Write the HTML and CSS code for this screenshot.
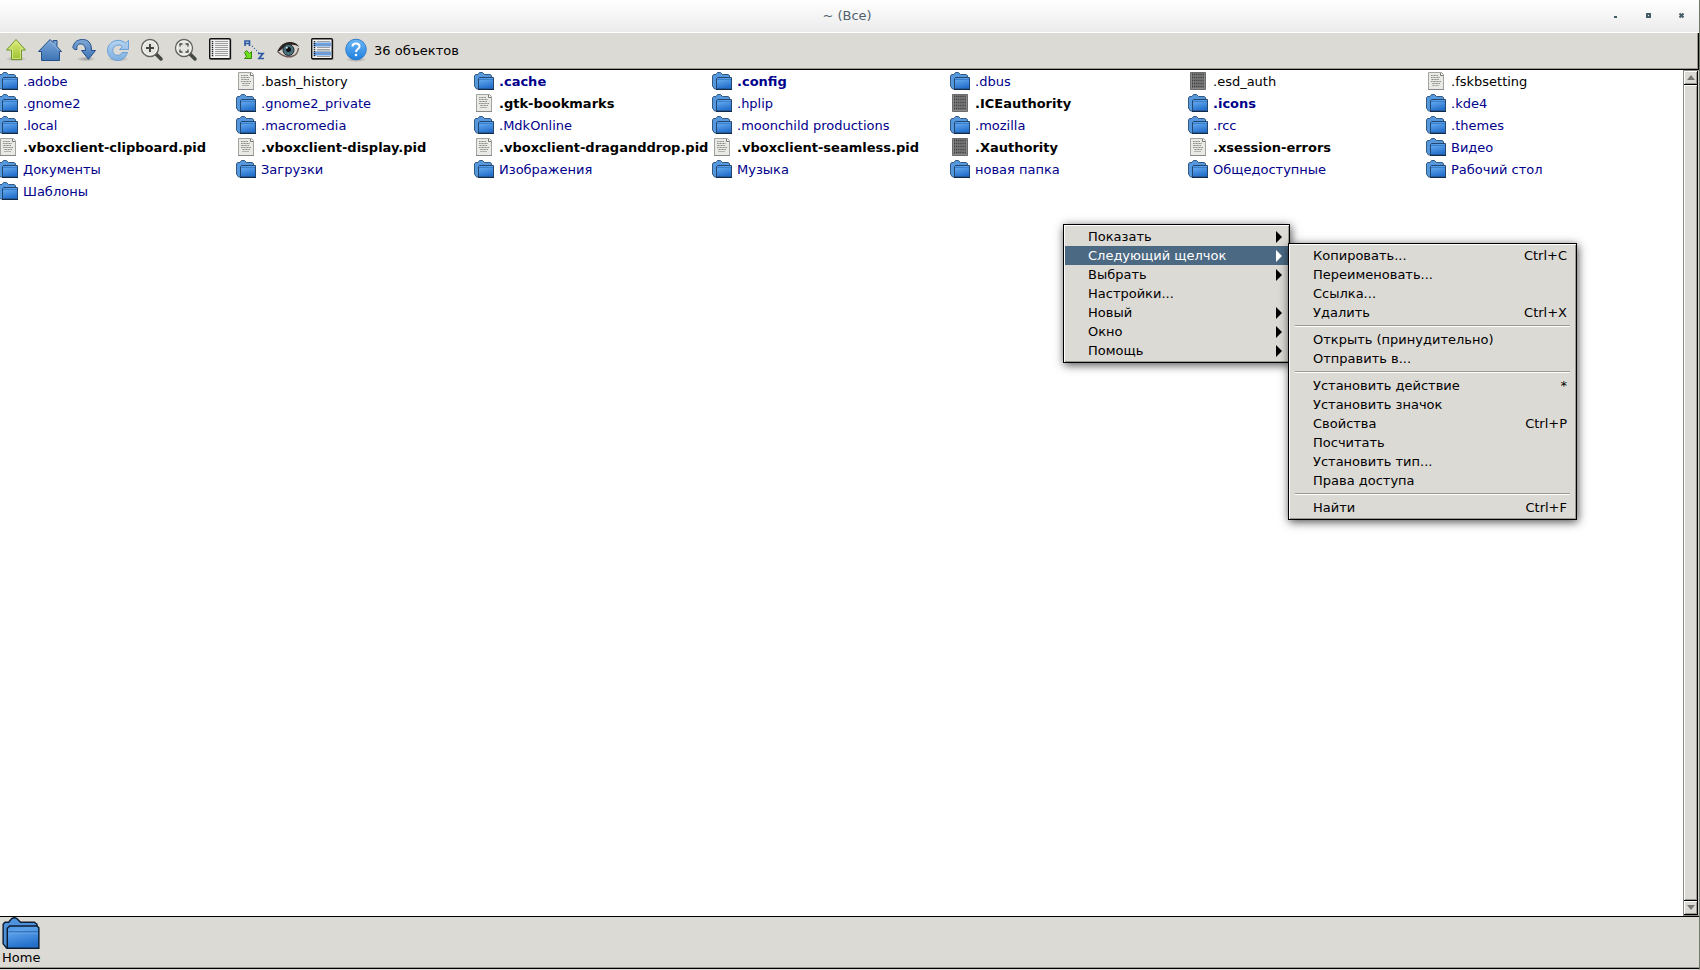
FILE: index.html
```html
<!DOCTYPE html>
<html lang="ru">
<head>
  <meta charset="UTF-8">
  <meta name="viewport" content="width=device-width, initial-scale=1.0">
  <title>~ (Все)</title>
  <link rel="stylesheet" href="styles.css">
</head>
<body>
  <svg class="sprite" aria-hidden="true">
    <defs>
      <linearGradient id="g-folder" x1="0" y1="0" x2=".3" y2="1">
        <stop offset="0" stop-color="#4a92e0"/><stop offset=".3" stop-color="#5ba1ea"/><stop offset="1" stop-color="#2470cb"/>
      </linearGradient>
      <linearGradient id="g-blue" x1="0" y1="0" x2="0" y2="1">
        <stop offset="0" stop-color="#7fa9d8"/><stop offset="1" stop-color="#3c73b5"/>
      </linearGradient>
      <linearGradient id="g-light" x1="0" y1="0" x2="0" y2="1">
        <stop offset="0" stop-color="#b5d3f0"/><stop offset="1" stop-color="#7fb0e0"/>
      </linearGradient>
      <linearGradient id="g-green" x1="0" y1="0" x2="0" y2="1">
        <stop offset="0" stop-color="#dbec7a"/><stop offset="1" stop-color="#9fc131"/>
      </linearGradient>
      <linearGradient id="g-help" x1="0" y1="0" x2="0" y2="1">
        <stop offset="0" stop-color="#6cb8f5"/><stop offset="1" stop-color="#1f7fe0"/>
      </linearGradient>
      <radialGradient id="g-shade">
        <stop offset="0" stop-color="#000" stop-opacity=".3"/><stop offset="1" stop-color="#000" stop-opacity="0"/>
      </radialGradient>
      <symbol id="folder" viewBox="0 0 20 18">
        <path d="M.5 14V4L1.500 2.500H4L5.500.5H8.500L10.500 2.500H16L17.500 3.500V7H5V17H2.500Z" fill="#5598de" stroke="#355a82"/>
        <path d="M4.500 17V6.500L5.500 5.500H19.500V17Z" fill="url(#g-folder)" stroke="#24476f"/>
        <path d="M5 7.500H19" stroke="#2f72bd" stroke-width=".7"/>
        <path d="M4 17.500H20" stroke="#12294a"/>
      </symbol>
      <symbol id="folder-big" viewBox="0 0 36 31">
        <path d="M.7 26V7L2.500 5H6L9 1.500 11.500.5 14 1.500 17.500 5H31L33.500 7V12H6V30H4Z" fill="#4d92dc" stroke="#0c1c30" stroke-width="1.400"/>
        <path d="M4.700 30.200V11L7 8.700H33.500L35.300 10.500V30.200Z" fill="url(#g-folder)" stroke="#0c1c30" stroke-width="1.400"/>
        <path d="M6 14.500H34.500" stroke="#1c589e"/>
        <path d="M6 15.500H34.500" stroke="#7db5ef" stroke-width=".7"/>
      </symbol>
      <symbol id="text" viewBox="0 0 20 18">
        <path d="M2.500.5H15.500L17.500 2.500V17.500H2.500Z" fill="#e9e9e6" stroke="#a3a39f"/>
        <path d="M14.500 1V3.500H17" fill="#fff" stroke="#777773"/>
        <path d="M5 3.500H12M5 5.500H14M5 7.500H13M5 9.500H15M6 11.500H14M6 13.500H13" stroke="#b0b0ac"/>
        <path d="M5 3.500H12M5 5.500H14M6 7.500H13M5 9.500H15M7 11.500H14" stroke="#8d8d89" stroke-dasharray="1 2"/>
        <path d="M2 17.500H18" stroke="#888"/>
      </symbol>
      <symbol id="binary" viewBox="0 0 20 18">
        <path d="M2.500.5H17.500V17.500H2.500Z" fill="#8a8a8a" stroke="#6b6b6b"/>
        <path d="M4 2.500H16M4 5.500H16M4 8.500H16M4 11.500H16M4 14.500H16" stroke="#3c3c3c" stroke-width="1.800" stroke-dasharray="1.300 .8"/>
      </symbol>
    </defs>
  </svg>

  <div class="window">
    <header class="titlebar">
      <h1>~ (Все)</h1>
      <div class="window-buttons">
        <button aria-label="Свернуть"><svg width="7" height="7"><path d="M2 4H5V6H2Z" fill="#455d68"/></svg></button>
        <button aria-label="Развернуть"><svg width="7" height="7"><path d="M2 2H5V5H2Z" fill="none" stroke="#455d68" stroke-width="2"/></svg></button>
        <button aria-label="Закрыть"><svg width="7" height="7"><path d="M1.500 1.500 5.500 5.500M5.500 1.500 1.500 5.500" stroke="#455d68" stroke-width="2"/></svg></button>
      </div>
    </header>

    <div class="toolbar">
      <button aria-label="Вверх"><svg viewBox="0 0 24 24">
        <ellipse cx="12" cy="21" rx="11" ry="2.500" fill="url(#g-shade)"/>
        <path d="M12 1.500 21.500 12H17.500V21.500H7.500V12H2.500Z" fill="url(#g-green)" stroke="#6f962c"/>
        <path d="M12 3.500 19 11H16.500V20.500H8.500V11H5Z" fill="none" stroke="#eaf5a4" stroke-width=".6"/>
      </svg></button>
      <button aria-label="Домой"><svg viewBox="0 0 24 24">
        <path d="M12 1.500 15 4.500V2.500H19V8.500L23.500 13.500H21.500V22.500H3.500V13.500H.5Z" fill="url(#g-blue)" stroke="#244f88"/>
        <path d="M12 3 21 12.500" fill="none" stroke="#a9c7e8" stroke-width=".7"/>
      </svg></button>
      <button aria-label="Закладки"><svg viewBox="0 0 24 24">
        <ellipse cx="14" cy="21" rx="10" ry="2.500" fill="url(#g-shade)"/>
        <path d="M.8 9.500C2 3.500 6 1.500 10.500 1.500C16.500 1.500 19.500 5 19.500 12.500H23.500L16.500 21.300 9.500 12.500H13.500C13.500 8 11.500 6 8.500 6C5 6 4.500 8.500 5 11.500C2.500 12 1.500 11 .8 9.500Z" fill="url(#g-blue)" stroke="#244f88"/>
      </svg></button>
      <button aria-label="Обновить"><svg viewBox="0 0 24 24">
        <ellipse cx="12" cy="21" rx="11" ry="2.500" fill="url(#g-shade)"/>
        <path d="M22.500 2.500V11.500H13.500L16.500 8.500C14 6 6.800 6.500 6.800 12.500C6.800 18 14 19 16 14.500H21.500C19.500 20 16 22.500 12 22.500C6 22.500 1.500 18 1.500 12.300C1.500 4 12-1 19.500 5Z" fill="url(#g-light)" stroke="#6aa0d6"/>
      </svg></button>
      <button aria-label="Увеличить"><svg viewBox="0 0 24 24">
        <path d="M16 16 21 21" stroke="#444842" stroke-width="3.500" stroke-linecap="round"/>
        <circle cx="10" cy="10" r="8.500" fill="#e4e4e1" stroke="#60645e" stroke-width="1.400"/>
        <circle cx="10" cy="10" r="7" fill="none" stroke="#f7f7f5"/>
        <path d="M10 6V14M6 10H14" stroke="#454545" stroke-width="2"/>
      </svg></button>
      <button aria-label="Вписать"><svg viewBox="0 0 24 24">
        <path d="M16 16 21 21" stroke="#444842" stroke-width="3.500" stroke-linecap="round"/>
        <circle cx="10" cy="10" r="8.500" fill="#e4e4e1" stroke="#60645e" stroke-width="1.400"/>
        <circle cx="10" cy="10" r="7" fill="none" stroke="#f7f7f5"/>
        <path d="M6 8.500V6H8.500M11.500 6H14V8.500M14 11.500V14H11.500M8.500 14H6V11.500" fill="none" stroke="#454545" stroke-width="1.300"/>
      </svg></button>
      <button aria-label="Подробности"><svg viewBox="0 0 24 24">
        <rect x="2" y="1" width="21.500" height="21" rx="1" fill="#999"/>
        <rect x="1.700" y=".7" width="20.600" height="20" rx="1" fill="#f2f2f2" stroke="#111" stroke-width="1.400"/>
        <path d="M4.500 3V19" stroke="#222" stroke-width="1.500" stroke-dasharray="1.200 .8"/>
        <path d="M7 3.500H20M7 5.500H20M7 7.500H20M7 9.500H20M7 11.500H20M7 13.500H20M7 15.500H20M7 17.500H20" stroke="#888" stroke-width=".8"/>
      </svg></button>
      <button aria-label="Сортировка"><svg viewBox="0 0 24 24">
        <path d="M3 8V3H7.500V8M3 5.500H7.500" fill="none" stroke="#2d5ca6" stroke-width="1.700"/>
        <path d="M16 15.500H21L17 20.500H22" fill="none" stroke="#2d5ca6" stroke-width="1.700"/>
        <path d="M10 8 17 15" stroke="#2d5ca6" stroke-width="1.200" stroke-dasharray="1 2"/>
        <path d="M2.500 14.500 4.500 12.500 7.500 15.500 9.500 13.500V20.500H2.500L4.500 18.500Z" fill="#6fe01c" stroke="#398514"/>
      </svg></button>
      <button aria-label="Скрытые файлы"><svg viewBox="0 0 24 24">
        <path d="M1 14C4 7 9 4 14 4C19 4 22 7 23 10C22 17 18 20 12 19.500C8 19 5 17 1 14Z" fill="#d9d3ce"/>
        <path d="M1 14C4 7 9 3.500 14 4C19 4 22 6.500 23 9C20 6.500 16 6 12 7.500C8 8.500 5 13 1 14Z" fill="#2d2422"/>
        <path d="M2 14C6 18 12 20 17 18C20 17 22 14 22.500 10" fill="none" stroke="#6d5a54" stroke-width="1.400"/>
        <circle cx="12.500" cy="12" r="5.500" fill="#49717b" stroke="#1f2d33"/>
        <circle cx="12.500" cy="11.500" r="2.500" fill="#0b0d0f"/>
        <circle cx="10.800" cy="9.800" r="1" fill="#dfe9ec"/>
      </svg></button>
      <button aria-label="Выбрать"><svg viewBox="0 0 24 24">
        <rect x="2" y="1" width="21.500" height="21" rx="1" fill="#999"/>
        <rect x="1.700" y=".7" width="20.600" height="20" rx="1" fill="#f2f2f2" stroke="#111" stroke-width="1.400"/>
        <path d="M3.500 6.500H21M3.500 15.500H21" stroke="#6ba3e8" stroke-width="4"/>
        <path d="M4.500 3V19" stroke="#222" stroke-width="1.500" stroke-dasharray="1.200 .8"/>
        <path d="M7 3.500H20M7 9.500H20M7 11.500H20M7 13H20M7 18.500H20" stroke="#888" stroke-width=".8"/>
        <path d="M7 6.500H20M7 15.500H20" stroke="#7c93ad" stroke-width=".8"/>
      </svg></button>
      <button aria-label="Справка"><svg viewBox="0 0 24 24">
        <ellipse cx="12" cy="21.500" rx="11" ry="2.500" fill="url(#g-shade)"/>
        <circle cx="12" cy="11.500" r="10.300" fill="url(#g-help)" stroke="#2d7ccc"/>
        <path d="M8.500 8.500C8.500 4.500 15.500 4.500 15.500 8.500C15.500 11 12 11 12 14" fill="none" stroke="#fff" stroke-width="2"/>
        <circle cx="12" cy="17" r="1.300" fill="#fff"/>
      </svg></button>
      <span class="status">36 объектов</span>
    </div>

    <main class="content">
      <div class="files">
        <a href="#" class="dir"><svg><use href="#folder"/></svg>.adobe</a>
        <a href="#"><svg><use href="#text"/></svg>.bash_history</a>
        <a href="#" class="dir recent"><svg><use href="#folder"/></svg>.cache</a>
        <a href="#" class="dir recent"><svg><use href="#folder"/></svg>.config</a>
        <a href="#" class="dir"><svg><use href="#folder"/></svg>.dbus</a>
        <a href="#"><svg><use href="#binary"/></svg>.esd_auth</a>
        <a href="#"><svg><use href="#text"/></svg>.fskbsetting</a>

        <a href="#" class="dir"><svg><use href="#folder"/></svg>.gnome2</a>
        <a href="#" class="dir"><svg><use href="#folder"/></svg>.gnome2_private</a>
        <a href="#" class="recent"><svg><use href="#text"/></svg>.gtk-bookmarks</a>
        <a href="#" class="dir"><svg><use href="#folder"/></svg>.hplip</a>
        <a href="#" class="recent"><svg><use href="#binary"/></svg>.ICEauthority</a>
        <a href="#" class="dir recent"><svg><use href="#folder"/></svg>.icons</a>
        <a href="#" class="dir"><svg><use href="#folder"/></svg>.kde4</a>

        <a href="#" class="dir"><svg><use href="#folder"/></svg>.local</a>
        <a href="#" class="dir"><svg><use href="#folder"/></svg>.macromedia</a>
        <a href="#" class="dir"><svg><use href="#folder"/></svg>.MdkOnline</a>
        <a href="#" class="dir"><svg><use href="#folder"/></svg>.moonchild productions</a>
        <a href="#" class="dir"><svg><use href="#folder"/></svg>.mozilla</a>
        <a href="#" class="dir"><svg><use href="#folder"/></svg>.rcc</a>
        <a href="#" class="dir"><svg><use href="#folder"/></svg>.themes</a>

        <a href="#" class="recent"><svg><use href="#text"/></svg>.vboxclient-clipboard.pid</a>
        <a href="#" class="recent"><svg><use href="#text"/></svg>.vboxclient-display.pid</a>
        <a href="#" class="recent"><svg><use href="#text"/></svg>.vboxclient-draganddrop.pid</a>
        <a href="#" class="recent"><svg><use href="#text"/></svg>.vboxclient-seamless.pid</a>
        <a href="#" class="recent"><svg><use href="#binary"/></svg>.Xauthority</a>
        <a href="#" class="recent"><svg><use href="#text"/></svg>.xsession-errors</a>
        <a href="#" class="dir"><svg><use href="#folder"/></svg>Видео</a>

        <a href="#" class="dir"><svg><use href="#folder"/></svg>Документы</a>
        <a href="#" class="dir"><svg><use href="#folder"/></svg>Загрузки</a>
        <a href="#" class="dir"><svg><use href="#folder"/></svg>Изображения</a>
        <a href="#" class="dir"><svg><use href="#folder"/></svg>Музыка</a>
        <a href="#" class="dir"><svg><use href="#folder"/></svg>новая папка</a>
        <a href="#" class="dir"><svg><use href="#folder"/></svg>Общедоступные</a>
        <a href="#" class="dir"><svg><use href="#folder"/></svg>Рабочий стол</a>

        <a href="#" class="dir"><svg><use href="#folder"/></svg>Шаблоны</a>
      </div>
      <div class="scrollbar">
        <button aria-label="Прокрутить вверх"><svg width="8" height="5"><path d="M0 5 4 0 8 5Z" fill="#777773"/></svg></button>
        <div class="thumb"></div>
        <button aria-label="Прокрутить вниз"><svg width="8" height="5"><path d="M0 0H8L4 5Z" fill="#777773"/></svg></button>
      </div>
    </main>

    <footer class="panel">
      <a href="#"><svg><use href="#folder-big"/></svg>Home</a>
    </footer>
  </div>

  <div class="menu context-menu">
    <button class="has-submenu">Показать</button>
    <button class="has-submenu active">Следующий щелчок</button>
    <button class="has-submenu">Выбрать</button>
    <button>Настройки...</button>
    <button class="has-submenu">Новый</button>
    <button class="has-submenu">Окно</button>
    <button class="has-submenu">Помощь</button>
    <div class="menu submenu">
      <button>Копировать...<kbd>Ctrl+C</kbd></button>
      <button>Переименовать...</button>
      <button>Ссылка...</button>
      <button>Удалить<kbd>Ctrl+X</kbd></button>
      <hr>
      <button>Открыть (принудительно)</button>
      <button>Отправить в...</button>
      <hr>
      <button>Установить действие<kbd>*</kbd></button>
      <button>Установить значок</button>
      <button>Свойства<kbd>Ctrl+P</kbd></button>
      <button>Посчитать</button>
      <button>Установить тип...</button>
      <button>Права доступа</button>
      <hr>
      <button>Найти<kbd>Ctrl+F</kbd></button>
    </div>
  </div>
</body>
</html>
```

FILE: styles.css
```css
* {
  box-sizing: border-box;
}

body {
  margin: 0;
  font-family: "DejaVu Sans", sans-serif;
  font-size: 13px;
  color: #000;
  background: #fff;
}

button {
  margin: 0;
  padding: 0;
  border: none;
  background: none;
  font: inherit;
  color: inherit;
}

a {
  color: inherit;
  text-decoration: none;
}

.sprite {
  position: absolute;
  width: 0;
  height: 0;
}

.window {
  display: flex;
  flex-direction: column;
  height: 100vh;
  border-right: 1px solid #6f7a6a;
  border-bottom: 1px solid #dcdad5;
}

/* title bar */
.titlebar {
  display: grid;
  grid-template-columns: 1fr auto 1fr;
  align-items: center;
  height: 33px;
  padding-right: 1px;
  padding-bottom: 1px;
  border-bottom: 1px solid #fff;
  background: linear-gradient(#fff, #ebebeb);
}

.titlebar h1 {
  grid-column: 2;
  margin: 0;
  padding-right: 4px;
  font-size: 13px;
  font-weight: normal;
  color: #4f626c;
}

.window-buttons {
  display: flex;
  justify-content: flex-end;
}

.window-buttons button {
  display: flex;
  align-items: center;
  justify-content: center;
  width: 33px;
  height: 30px;
}

/* toolbar */
.toolbar {
  display: flex;
  align-items: center;
  height: 37px;
  padding-bottom: 2px;
  border-right: 1px solid #000;
  border-bottom: 1px solid #000;
  background: #dcdad5;
  box-shadow: inset -1px -1px #9b998f;
}

.toolbar button {
  display: flex;
  justify-content: flex-start;
  width: 34px;
  padding-left: 4px;
}

.toolbar svg {
  width: 24px;
  height: 24px;
}

/* file list */
.content {
  display: flex;
  flex: 1;
  min-height: 0;
}

.files {
  display: grid;
  flex: 1;
  grid-template-columns: repeat(auto-fill, 238px);
  grid-auto-rows: 22px;
  align-content: start;
  margin-left: -2px;
  overflow: hidden;
}

.files a {
  display: flex;
  align-items: center;
  gap: 5px;
  white-space: nowrap;
}

.files svg {
  width: 20px;
  height: 18px;
}

.files .dir {
  color: #00008b;
}

.files .recent {
  font-weight: bold;
}

.scrollbar {
  display: flex;
  flex-direction: column;
  width: 16px;
  border: 1px solid #8a8882;
  border-right-color: #d0d0cc;
  background: #dcdad5;
}

.scrollbar button,
.thumb {
  display: flex;
  align-items: center;
  justify-content: center;
  height: 14px;
  border-right: 1px solid #000;
  border-bottom: 1px solid #000;
  box-shadow: inset 1px 1px #fff, inset -1px -1px #9b998f;
}

.scrollbar .thumb {
  flex: 1;
}

/* bottom panel */
.panel {
  height: 53px;
  border-top: 1px solid #000;
  border-bottom: 1px solid #000;
  background: #dcdad5;
  box-shadow: inset 0 -1px #9b998f;
}

.panel a {
  display: inline-flex;
  flex-direction: column;
  padding: 0 2px;
  line-height: 17px;
}

.panel svg {
  width: 38px;
  height: 32px;
}

/* menus */
.menu {
  position: absolute;
  padding: 2px 1px;
  border: 1px solid #000;
  background: #dcdad5;
  box-shadow: inset 1px 1px #fff, inset -1px -1px #9b998f, 1px 2px 9px rgba(0, 0, 0, 0.7);
}

.menu button {
  display: flex;
  align-items: center;
  justify-content: space-between;
  width: 100%;
  height: 19px;
  padding: 0 8px 0 23px;
  white-space: nowrap;
}

.menu .active {
  background: #4b6983;
  color: #fff;
}

.has-submenu::after {
  content: "";
  border: solid transparent;
  border-width: 6px 0 6px 6px;
  border-left-color: currentColor;
}

.menu kbd {
  font-family: inherit;
}

.menu hr {
  height: 2px;
  margin: 3px 5px;
  border: none;
  border-top: 1px solid #9b998f;
  border-bottom: 1px solid #fff;
}

.context-menu {
  top: 224px;
  left: 1063px;
  width: 227px;
}

.context-menu > button {
  padding-right: 6px;
}

.submenu {
  top: 18px;
  left: 224px;
  width: 289px;
}
```
